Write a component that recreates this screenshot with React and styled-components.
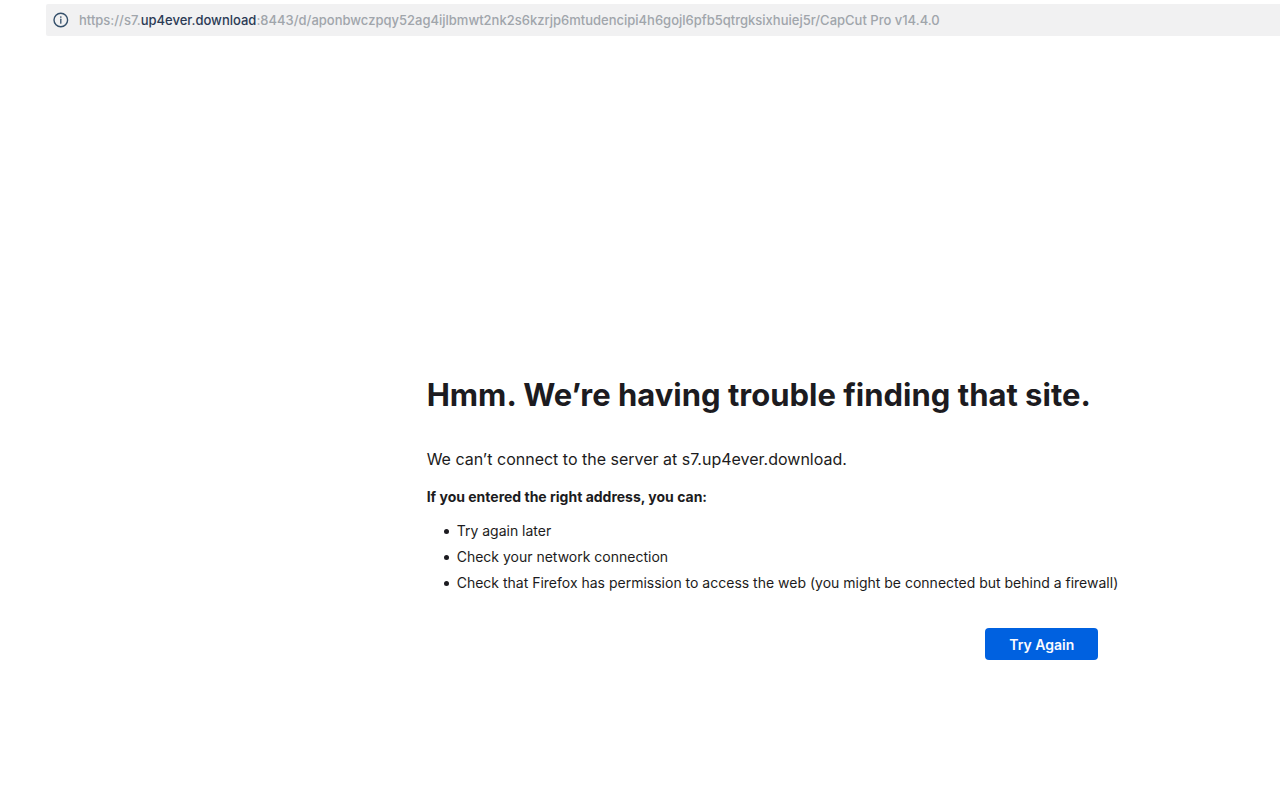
import styled, { createGlobalStyle } from 'styled-components';

const tips = [
    'Try again later',
    'Check your network connection',
    'Check that Firefox has permission to access the web (you might be connected but behind a firewall)',
];

const InfoIcon = () => (
    <svg width="16" height="16" viewBox="0 0 16 16" fill="none" aria-hidden="true">
        <circle cx="7.8" cy="8" r="6.8" stroke="#35506b" strokeWidth="1.4" />
        <circle cx="7.8" cy="5" r="0.85" fill="#35506b" />
        <path d="M7.8 7.2v4" stroke="#35506b" strokeWidth="1.3" strokeLinecap="round" />
    </svg>
);

const App = () => {
    return (
        <Wrapper>
            <GlobalStyle />
            <AddressBar>
                <InfoIcon />
                <Url>
                    https://s7.<Domain>up4ever.download</Domain>:8443/d/aponbwczpqy52ag4ijlbmwt2nk2s6kzrjp6mtudencipi4h6gojl6pfb5qtrgksixhuiej5r/CapCut Pro v14.4.0
                </Url>
            </AddressBar>
            <Main>
                <ErrorBox>
                    <Title>Hmm. We’re having trouble finding that site.</Title>
                    <Lead>We can’t connect to the server at s7.up4ever.download.</Lead>
                    <Hint>If you entered the right address, you can:</Hint>
                    <TipList>
                        {tips.map((tip) => (
                            <Tip key={tip}>{tip}</Tip>
                        ))}
                    </TipList>
                    <Actions>
                        <RetryButton type="button">Try Again</RetryButton>
                    </Actions>
                </ErrorBox>
            </Main>
        </Wrapper>
    );
}

export default App;

const GlobalStyle = createGlobalStyle`
    * {
        margin: 0;
        padding: 0;
        box-sizing: border-box;
    }

    body {
        background: #ffffff;
        color: #1c1b20;
        font-family: Inter, 'Liberation Sans', sans-serif;
    }
`;

const Wrapper = styled.div`
    min-height: 100vh;
    padding-top: 4px;
    display: flex;
    flex-direction: column;
`;

const AddressBar = styled.header`
    height: 32px;
    margin-left: 46px;
    padding-left: 7px;
    display: flex;
    align-items: center;
    gap: 10px;
    background: #f1f1f2;
    border-radius: 2px 0 0 2px;

    svg {
        flex: none;
    }
`;

const Url = styled.p`
    font-size: 13px;
    font-weight: 500;
    line-height: 20px;
    color: #a0a5ab;
    white-space: nowrap;
    overflow: hidden;
`;

const Domain = styled.span`
    color: #2b3a55;
`;

const Main = styled.main`
    flex: 1;
    display: grid;
    grid-template-columns: 1fr 2fr;
    align-content: center;
    padding-top: 189px;
`;

const ErrorBox = styled.section`
    grid-column: 2;
    justify-self: start;
`;

const Title = styled.h1`
    font-size: 31px;
    font-weight: 700;
    line-height: 40px;
`;

const Lead = styled.p`
    margin-top: 32px;
    font-size: 16px;
    line-height: 24px;
`;

const Hint = styled.h2`
    margin-top: 16px;
    font-size: 14px;
    font-weight: 700;
    line-height: 20px;
`;

const TipList = styled.ul`
    margin-top: 11px;
    padding-left: 17px;
    list-style: none;
`;

const Tip = styled.li`
    display: flex;
    align-items: center;
    gap: 8px;
    font-size: 14px;
    line-height: 26px;

    &::before {
        content: '';
        flex: none;
        width: 5px;
        height: 5px;
        border-radius: 50%;
        background: currentColor;
    }
`;

const Actions = styled.div`
    margin-top: 32px;
    padding-right: 20px;
    display: flex;
    justify-content: flex-end;
`;

const RetryButton = styled.button`
    height: 32px;
    padding: 0 24px;
    border: none;
    border-radius: 4px;
    background: #0061e0;
    color: #fbfbfe;
    font-family: inherit;
    font-size: 14px;
    font-weight: 600;
    cursor: pointer;
`;
